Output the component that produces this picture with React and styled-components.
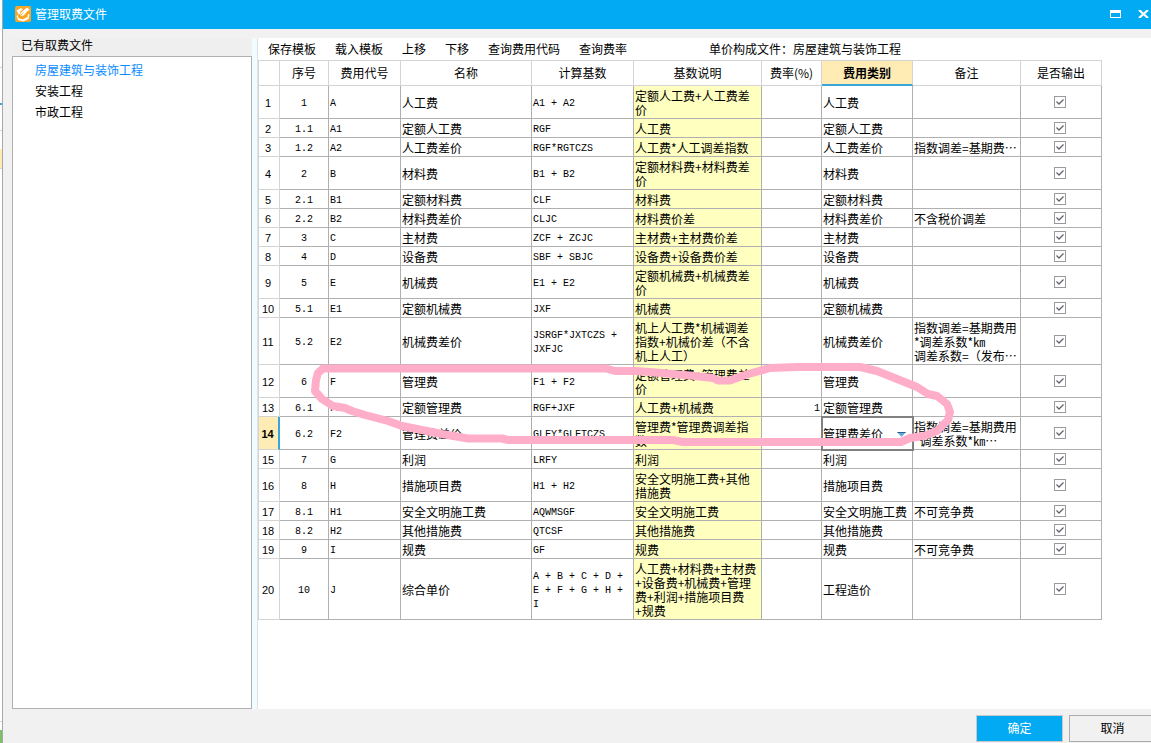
import styled, { createGlobalStyle } from 'styled-components';

const GlobalStyle = createGlobalStyle`
  * {
    box-sizing: border-box;
  }

  body {
    margin: 0;
    font-family: "Noto Sans CJK SC", "Liberation Sans", sans-serif;
    font-size: 12px;
    line-height: 14px;
    color: #000;
  }

  button, select {
    font: inherit;
    color: inherit;
  }
`;

const Screen = styled.div`
  display: flex;
  min-height: 100vh;
  overflow: hidden;
`;

/* sliver of the window behind the dialog */
const Behind = styled.div`
  flex: none;
  width: 2px;
  background: linear-gradient(
    #fff 67px, #d4d4d4 67px 68px, #fff 68px 103px,
    #3aa9dc 103px 105px, #fff 105px 130px, #d4d4d4 130px 131px,
    #fff 131px 149px, #ffecb5 149px 168px, #d4d4d4 168px 169px,
    #fff 169px 721px, #d4d4d4 721px 722px, #fff 722px 730px, #7cc067 730px
  );
`;

const Dialog = styled.div`
  flex: 1;
  min-width: 0;
  display: flex;
  flex-direction: column;
  border-left: 1px solid #a8a8a8;
  background: #f1f1f1;
`;

const TitleBar = styled.header`
  display: flex;
  align-items: center;
  height: 29px;
  padding: 0 1px 2px 12px;
  background: #02a9f3;
  color: #fff;
`;

const Title = styled.h1`
  flex: 1;
  margin: 0 0 0 4px;
  font-size: 12px;
  font-weight: normal;
`;

const WindowButton = styled.button`
  display: flex;
  margin-left: 17px;
  padding: 0;
  border: none;
  background: none;
`;

const Body = styled.div`
  flex: 1;
  display: flex;
  padding: 9px 0 0 9px;
`;

const Sidebar = styled.aside`
  flex: none;
  display: flex;
  flex-direction: column;
  width: 240px;
`;

const SidebarTitle = styled.h2`
  height: 18px;
  margin: 0;
  padding-left: 9px;
  font-size: 12px;
  font-weight: normal;
  line-height: 14px;
  background: #efefef;
`;

const FileList = styled.ul`
  flex: 1;
  margin: 0;
  padding: 2px 0 0 22px;
  list-style: none;
  border: 1px solid #b0b0b0;
  background: #fff;
`;

const FileItem = styled.li`
  line-height: 21px;
  color: ${({ $active }) => ($active ? '#0a8cff' : '#000')};
`;

const Splitter = styled.div`
  flex: none;
  width: 6px;
  border-right: 1px solid #dfe3e6;
  background: #f0fcff;
`;

const Main = styled.main`
  flex: 1;
  min-width: 0;
  background: #fff;
`;

const Toolbar = styled.div`
  display: flex;
  align-items: center;
  gap: 19px;
  height: 22px;
  padding-left: 10px;
  white-space: nowrap;
`;

const ToolButton = styled.button`
  padding: 0;
  border: none;
  background: none;
`;

const FileLabel = styled.span`
  margin-left: 63px;
`;

const GridArea = styled.div`
  position: relative;
`;

const Grid = styled.table`
  width: 844px;
  table-layout: fixed;
  border-collapse: separate;
  border-spacing: 0;
`;

const HeadCell = styled.th`
  height: 26px;
  padding: 0;
  border: solid #d4d4d4;
  border-width: 1px 1px 1px 0;
  font-weight: normal;

  &:first-child {
    border-left-width: 1px;
  }

  ${({ $active }) => $active && `
    font-weight: bold;
    background: #ffecb5;
    border-bottom: 2px solid #3aa5d8;
  `}
`;

const RowHead = styled.th`
  padding: 2px 2px 0 0;
  border: solid #d4d4d4;
  border-width: 0 1px 1px 1px;
  font-weight: normal;
  font-size: 11px;
  font-family: "Liberation Sans", sans-serif;

  ${({ $active }) => $active && `
    font-weight: bold;
    background: #ffecb5;
    border-right: 2px solid #3aa5d8;
  `}
`;

const Cell = styled.td`
  padding: 3px 1px 1px;
  border: solid #b0b0b0;
  border-width: 0 1px 1px 0;
  white-space: pre;
  text-align: ${({ $align }) => $align || 'left'};
  background: ${({ $tint }) => ($tint ? '#ffffc0' : 'transparent')};
`;

const CodeCell = styled(Cell)`
  padding-top: 4px;
  padding-bottom: 0;
  font-family: "Liberation Mono", monospace;
  font-size: 10px;
`;

const CheckCell = styled(Cell)`
  padding: 2px 3px 2px 1px;
`;

const SelectCell = styled(Cell)`
  outline: 2px solid #808080;
  outline-offset: -1px;
`;

const SelectBox = styled.div`
  display: flex;
  align-items: center;
  padding-right: 5px;
`;

const Select = styled.select`
  flex: 1;
  min-width: 0;
  height: 14px;
  padding: 0;
  border: none;
  background: none;
  appearance: none;
  outline: none;
`;

const CheckLabel = styled.label`
  display: block;
  position: relative;
  width: 12px;
  height: 12px;
  margin: 0 auto;

  svg {
    position: absolute;
    inset: 0;
    pointer-events: none;
  }
`;

const CheckInput = styled.input`
  display: block;
  width: 12px;
  height: 12px;
  margin: 0;
  appearance: none;
  border: 1px solid #9a9a9a;
  background: #fff;
`;

const Scribble = styled.svg`
  position: absolute;
  top: 0;
  left: 0;
  pointer-events: none;
`;

const Footer = styled.footer`
  display: flex;
  justify-content: flex-end;
  gap: 6px;
  height: 34px;
  padding-top: 6px;
`;

const OkButton = styled.button`
  width: 87px;
  height: 27px;
  padding: 0 0 2px;
  border: 1px solid #c8c8c8;
  background: #02a9f3;
  color: #fff;
`;

const CancelButton = styled.button`
  width: 82px;
  height: 27px;
  padding: 0 0 2px 4px;
  border: 1px solid #adadad;
  border-right: none;
  background: #f1f1f1;
`;

const tools = ['保存模板', '载入模板', '上移', '下移', '查询费用代码', '查询费率'];

const columnWidths = [22, 49, 72, 131, 102, 128, 60, 91, 108, 81];
const headers = ['', '序号', '费用代号', '名称', '计算基数', '基数说明', '费率(%)', '费用类别', '备注', '是否输出'];

// no, code, name, base, description, rate, category, note
const rows = [
  ['1', 'A', '人工费', 'A1 + A2', '定额人工费+人工费差\n价', '', '人工费', ''],
  ['1.1', 'A1', '定额人工费', 'RGF', '人工费', '', '定额人工费', ''],
  ['1.2', 'A2', '人工费差价', 'RGF*RGTCZS', '人工费*人工调差指数', '', '人工费差价', '指数调差=基期费…'],
  ['2', 'B', '材料费', 'B1 + B2', '定额材料费+材料费差\n价', '', '材料费', ''],
  ['2.1', 'B1', '定额材料费', 'CLF', '材料费', '', '定额材料费', ''],
  ['2.2', 'B2', '材料费差价', 'CLJC', '材料费价差', '', '材料费差价', '不含税价调差'],
  ['3', 'C', '主材费', 'ZCF + ZCJC', '主材费+主材费价差', '', '主材费', ''],
  ['4', 'D', '设备费', 'SBF + SBJC', '设备费+设备费价差', '', '设备费', ''],
  ['5', 'E', '机械费', 'E1 + E2', '定额机械费+机械费差\n价', '', '机械费', ''],
  ['5.1', 'E1', '定额机械费', 'JXF', '机械费', '', '定额机械费', ''],
  ['5.2', 'E2', '机械费差价', 'JSRGF*JXTCZS +\nJXFJC', '机上人工费*机械调差\n指数+机械价差（不含\n机上人工）', '', '机械费差价', '指数调差=基期费用\n*调差系数*㎞\n调差系数=（发布…'],
  ['6', 'F', '管理费', 'F1 + F2', '定额管理费+管理费差\n价', '', '管理费', ''],
  ['6.1', 'F1', '定额管理费', 'RGF+JXF', '人工费+机械费', '1', '定额管理费', ''],
  ['6.2', 'F2', '管理费差价', 'GLFY*GLFTCZS', '管理费*管理费调差指\n数', '', '管理费差价', '指数调差=基期费用\n*调差系数*㎞…'],
  ['7', 'G', '利润', 'LRFY', '利润', '', '利润', ''],
  ['8', 'H', '措施项目费', 'H1 + H2', '安全文明施工费+其他\n措施费', '', '措施项目费', ''],
  ['8.1', 'H1', '安全文明施工费', 'AQWMSGF', '安全文明施工费', '', '安全文明施工费', '不可竞争费'],
  ['8.2', 'H2', '其他措施费', 'QTCSF', '其他措施费', '', '其他措施费', ''],
  ['9', 'I', '规费', 'GF', '规费', '', '规费', '不可竞争费'],
  ['10', 'J', '综合单价', 'A + B + C + D +\nE + F + G + H +\nI', '人工费+材料费+主材费\n+设备费+机械费+管理\n费+利润+措施项目费\n+规费', '', '工程造价', ''],
];

const activeRow = 13;

function AppIcon() {
  return (
    <svg width="16" height="16" viewBox="0 0 16 16" aria-hidden="true">
      <rect width="16" height="16" rx="2" fill="#fba524" />
      <path d="M1.5 4.5L6 2l2 1.5-3 2 .5 2L2.5 9l1 3 4 1.5 5-2.5.5-3 1.5.5-1 4.5-5 2.5-5.5-1.5-1.5-4 2-2z" fill="#fff" />
      <path d="M5 10l1-3.5L12 1.5l2.5 2L9 9.5z" fill="#fff" />
      <path d="M5 10l3.5-3.5M9 9.5l4-4.5" stroke="#fba524" strokeWidth="0.8" />
    </svg>
  );
}

function Check({ label }) {
  return (
    <CheckLabel>
      <CheckInput type="checkbox" aria-label={label} defaultChecked />
      <svg width="12" height="12" viewBox="0 0 12 12" fill="none" stroke="#62626e" strokeWidth="1.3">
        <path d="M2.5 5.5l2.5 2.5 4.5-4.5" />
      </svg>
    </CheckLabel>
  );
}

function Row({ row, index }) {
  const [no, code, name, base, description, rate, category, note] = row;
  const active = index === activeRow;

  return (
    <tr>
      <RowHead scope="row" $active={active}>{index + 1}</RowHead>
      <CodeCell $align="center">{no}</CodeCell>
      <CodeCell>{code}</CodeCell>
      <Cell>{name}</Cell>
      <CodeCell>{base}</CodeCell>
      <Cell $tint>{description}</Cell>
      <CodeCell $align="right">{rate}</CodeCell>
      {active ? (
        <SelectCell>
          <SelectBox>
            <Select aria-label="费用类别" defaultValue={category}>
              <option>{category}</option>
            </Select>
            <svg width="9" height="5" viewBox="0 0 9 5" aria-hidden="true">
              <path d="M0 0h9L4.5 5z" fill="#5fa8dc" />
              <path d="M0 0h9l-1 1H1z" fill="#2c5f8c" />
            </svg>
          </SelectBox>
        </SelectCell>
      ) : (
        <Cell>{category}</Cell>
      )}
      <Cell>{note}</Cell>
      <CheckCell><Check label={`${name} 是否输出`} /></CheckCell>
    </tr>
  );
}

function App() {
  return (
    <Screen lang="zh-CN">
      <GlobalStyle />
      <Behind />
      <Dialog>
        <TitleBar>
          <AppIcon />
          <Title>管理取费文件</Title>
          <WindowButton aria-label="最大化">
            <svg width="11" height="8" viewBox="0 0 11 8" fill="#fff">
              <path d="M0 0h11v8H0zM1 3v4h9V3z" fillRule="evenodd" />
            </svg>
          </WindowButton>
          <WindowButton aria-label="关闭">
            <svg width="12" height="8" viewBox="0 0 12 8" stroke="#fff" strokeWidth="2.2">
              <path d="M1 0l9 8M10 0l-9 8" />
            </svg>
          </WindowButton>
        </TitleBar>

        <Body>
          <Sidebar>
            <SidebarTitle>已有取费文件</SidebarTitle>
            <FileList>
              <FileItem $active>房屋建筑与装饰工程</FileItem>
              <FileItem>安装工程</FileItem>
              <FileItem>市政工程</FileItem>
            </FileList>
          </Sidebar>
          <Splitter />
          <Main>
            <Toolbar>
              {tools.map((tool) => <ToolButton key={tool}>{tool}</ToolButton>)}
              <FileLabel>单价构成文件：房屋建筑与装饰工程</FileLabel>
            </Toolbar>
            <GridArea>
              <Grid>
                <colgroup>
                  {columnWidths.map((width, i) => <col key={i} width={width} />)}
                </colgroup>
                <thead>
                  <tr>
                    {headers.map((header) => (
                      <HeadCell key={header} scope="col" $active={header === '费用类别'}>{header}</HeadCell>
                    ))}
                  </tr>
                </thead>
                <tbody>
                  {rows.map((row, i) => <Row key={row[0]} row={row} index={i} />)}
                </tbody>
              </Grid>
              {/* hand-drawn marker around the 管理费 rows */}
              <Scribble width="844" height="560" viewBox="258 60 844 560" aria-hidden="true">
                <path
                  d="M323 368.5H606L615 371H635L650 372L690 375.5L713 378L718 380.500H730L745 375L770 368L797 367H860L877 371L897 379L917 387L928 394L937 396L947 404L950 412L948 420L937 431L924 436L910 438L901 442H763L683 442L673 440H508L502 438.500H468L442 434L402 426L388 421L365 415L352 411L345 408L333 406L322 399L315 391L316 380L318 373Z"
                  fill="none"
                  stroke="#ffaec9"
                  strokeWidth="8"
                  strokeLinecap="round"
                  strokeLinejoin="round"
                />
              </Scribble>
            </GridArea>
          </Main>
        </Body>

        <Footer>
          <OkButton>确定</OkButton>
          <CancelButton>取消</CancelButton>
        </Footer>
      </Dialog>
    </Screen>
  );
}

export default App;
